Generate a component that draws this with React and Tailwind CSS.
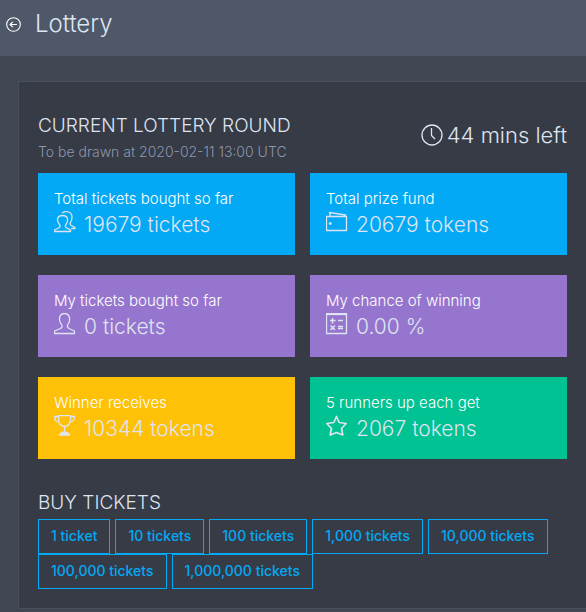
const strokes = {
  back: (
    <>
      <circle cx="11" cy="11" r="10" />
      <path d="M16 11H6M10 7l-4 4 4 4" />
    </>
  ),
  clock: (
    <>
      <circle cx="11" cy="11" r="10" />
      <path d="M10.5 4v7.500l3.500 3.500" />
    </>
  ),
  users: (
    <>
      <path d="M.5 20.500v-1.500l5-2.500c.8-.5.8-2 0-3C2.500 10 2.500 4.500 8.500 4.500s6 5.500 3.500 9c-.8 1-.8 2.500 0 3l4.500 2.500v1.500z" />
      <path d="M8 2c4-2.500 10-1.500 10 4 0 2.500-.5 4-1.500 5.500-.8 1-.5 2 .5 2.800l4 2.200v1h-4" />
    </>
  ),
  wallet: (
    <>
      <path d="M.5 5.500h20v14H.5zM4.500 5.500l-1-4 16 2.500v1.500" />
      <path d="M3.500 12h1.500v1H3.500z" />
    </>
  ),
  user: (
    <path d="M.5 20.500v-2.500l6-2.500c2-1 2-2.500 1-4C4.500 8 4.500.5 10.500.5s6 7.500 3.500 11c-1 1.500-1 3 1 4l5.500 2.500v2.500z" />
  ),
  calculator: (
    <>
      <path d="M.5.500h20v20H.5z" />
      <path d="M1 1.500h20" />
      <path strokeWidth="1.500" d="M4 7.500h5.500M6.500 5v5.500M12 7.500h5M12 13.500h5M12 15.500h5M4.500 12.500l4.500 4.500M9 12.500l-4.500 4.500" />
    </>
  ),
  trophy: (
    <>
      <path d="M4.500.500h12v4c0 4-2.500 7-6 7s-6-3-6-7zM4.500 1.500h-4c0 4 1.500 5 5 6M16.500 1.500h4c0 4-1.500 5-5 6M10.500 11v6" />
      <path fill="currentColor" d="M7.500 17.500h6v1.500h2v1h-10v-1h2z" />
    </>
  ),
  star: (
    <path strokeWidth="1.700" d="M10.500 1.500l2.700 6 7 1-4.700 5 1.300 6.500-6.300-2.500-6.300 2.500 1.300-6.500-4.700-5 7-1z" />
  ),
};

function Icon({ name, size = 22 }) {
  return (
    <svg
      width={size}
      height={size}
      viewBox="0 0 22 22"
      fill="none"
      stroke="currentColor"
      strokeWidth={size < 20 ? 1.6 : 1.3}
      strokeLinejoin="round"
      className="shrink-0"
      aria-hidden="true"
    >
      {strokes[name]}
    </svg>
  );
}

const stats = [
  { label: "Total tickets bought so far", value: "19679 tickets", icon: "users", color: "bg-[#03a9f4]" },
  { label: "Total prize fund", value: "20679 tokens", icon: "wallet", color: "bg-[#03a9f4]" },
  { label: "My tickets bought so far", value: "0 tickets", icon: "user", color: "bg-[#9675ce]" },
  { label: "My chance of winning", value: "0.00 %", icon: "calculator", color: "bg-[#9675ce]" },
  { label: "Winner receives", value: "10344 tokens", icon: "trophy", color: "bg-[#ffc107]" },
  { label: "5 runners up each get", value: "2067 tokens", icon: "star", color: "bg-[#00c292]" },
];

const amounts = [
  "1 ticket",
  "10 tickets",
  "100 tickets",
  "1,000 tickets",
  "10,000 tickets",
  "100,000 tickets",
  "1,000,000 tickets",
];

export default function App() {
  return (
    <div className="min-h-screen bg-[#404652] font-['Inter',sans-serif] font-light text-[#dee4f1]">
      <header className="flex h-14 items-center gap-3.5 bg-[#4f5868] px-1.5 pb-2">
        <a href="#back" aria-label="Back" className="text-white">
          <Icon name="back" size={15} />
        </a>
        <h1 className="text-2xl">Lottery</h1>
      </header>

      <main className="pt-[25px] pb-1 pl-[18px]">
        <section className="border-y border-l border-[#4b515c] bg-[#363b46] pr-[19px] pb-[19px] pl-[19px]">
          {/* Round info */}
          <div className="flex items-center justify-between pt-8">
            <div>
              <h2 className="text-[19px] leading-6">CURRENT LOTTERY ROUND</h2>
              <p className="mt-0.5 text-sm leading-6 text-[#8d97ad]">To be drawn at 2020-02-11 13:00 UTC</p>
            </div>
            <div className="flex items-center gap-1 pb-2 text-[22px] leading-6">
              <Icon name="clock" />
              44 mins left
            </div>
          </div>

          <div className="mt-[9px] grid grid-cols-2 gap-x-[15px] gap-y-5">
            {stats.map(({ label, value, icon, color }) => (
              <div key={label} className={`p-4 ${color}`}>
                <p className="text-[15px] leading-5 text-white">{label}</p>
                <div className="flex items-start gap-2 pt-0.5 text-[21px] leading-7">
                  <Icon name={icon} />
                  {value}
                </div>
              </div>
            ))}
          </div>

          {/* Buy buttons */}
          <h2 className="mt-8 pb-1 text-[19px] leading-6">BUY TICKETS</h2>
          <div className="flex flex-wrap gap-x-[5px]">
            {amounts.map((amount) => (
              <button
                key={amount}
                type="button"
                className="h-[35px] cursor-pointer border border-[#03a9f4] px-3 pb-0.5 text-sm font-medium text-[#03a9f4]"
              >
                {amount}
              </button>
            ))}
          </div>
        </section>
      </main>
    </div>
  );
}
